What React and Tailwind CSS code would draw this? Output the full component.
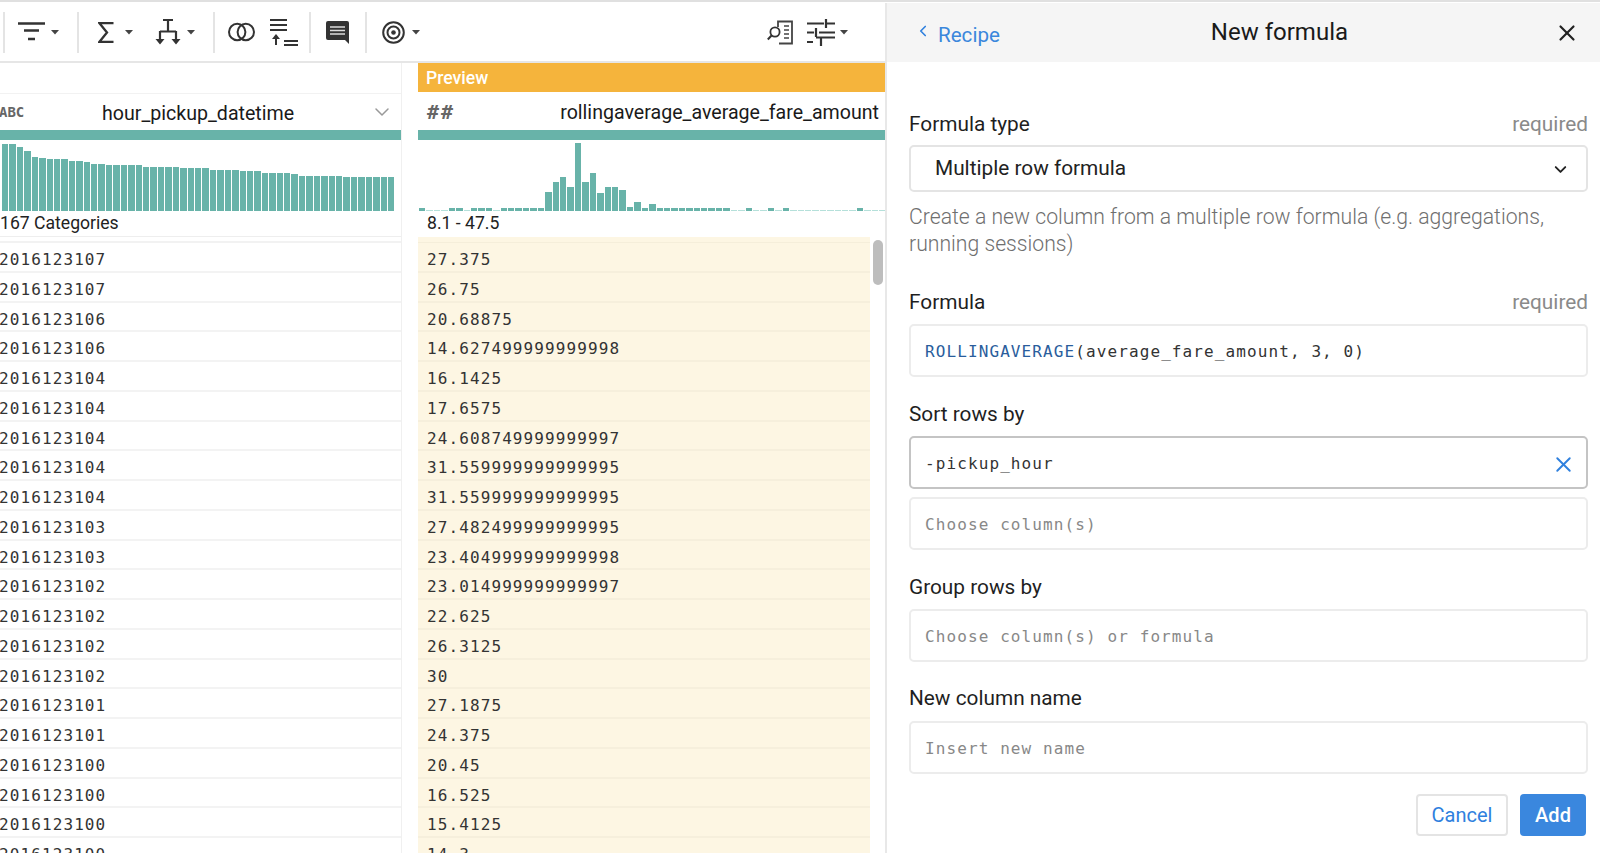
import { ChevronDown, ChevronLeft, X } from 'lucide-react'

const leftTops = [42,42,52,62,80,84,88,88,88,92,92,97,101,101,106,106,106,106,106,110,110,110,110,110,115,115,115,115,119,119,119,119,124,124,124,128,128,128,128,133,137,137,137,137,137,137,142,142,142,142,142,142,142]
const leftBars = leftTops.map((t) => (243 - t) / 3)

const rightBars = [3,1,1,1,3,3,1,3,3,3,1,3,3,3,3,3,3,19,29,34,24,68,29,38,18,24,24,21,4,9,3,7,3,3,3,3,3,3,3,3,3,3,1,1,3,1,1,3,1,3,1,1,1,1,1,1,1,1,1,3,1,1,1]

const rows = [
  ['2016123107', '27.375'],
  ['2016123107', '26.75'],
  ['2016123106', '20.68875'],
  ['2016123106', '14.627499999999998'],
  ['2016123104', '16.1425'],
  ['2016123104', '17.6575'],
  ['2016123104', '24.608749999999997'],
  ['2016123104', '31.559999999999995'],
  ['2016123104', '31.559999999999995'],
  ['2016123103', '27.482499999999995'],
  ['2016123103', '23.404999999999998'],
  ['2016123102', '23.014999999999997'],
  ['2016123102', '22.625'],
  ['2016123102', '26.3125'],
  ['2016123102', '30'],
  ['2016123101', '27.1875'],
  ['2016123101', '24.375'],
  ['2016123100', '20.45'],
  ['2016123100', '16.525'],
  ['2016123100', '15.4125'],
  ['2016123100', '14.3'],
]

function Caret({ className }) {
  return (
    <svg width="8" height="5" viewBox="0 0 8 5" className={className}>
      <path d="M0 0h8L4 4.5z" fill="#444" />
    </svg>
  )
}

function Sep({ className }) {
  return <div className={`h-[41px] w-[2px] shrink-0 bg-[#e4e4e4] ${className}`} />
}

function Toolbar() {
  return (
    <div className="flex h-[60px] shrink-0 items-center border-b-2 border-[#e6e6e6] bg-white pl-[3px]">
      <Sep />
      {/* filter */}
      <svg width="27" height="20" viewBox="0 0 27 20" className="ml-[13px]">
        <path d="M0 1.5h27M6 8.5h15M10 17h7" stroke="#333" strokeWidth="2.4" />
      </svg>
      <Caret className="ml-[6px]" />
      <Sep className="ml-[18px]" />
      {/* sigma */}
      <svg width="16" height="21" viewBox="0 0 16 21" className="ml-[19px]">
        <path d="M15.5 1.2H1.5L9 10.5 1.5 19.8h14" fill="none" stroke="#333" strokeWidth="2.3" />
      </svg>
      <Caret className="ml-[11px]" />
      {/* split */}
      <svg width="26" height="26" viewBox="0 0 26 26" className="ml-[22px]">
        <path d="M8 1h10M13 1v11M5 12.5h16M5 12v10M21 12v10" fill="none" stroke="#333" strokeWidth="2.2" />
        <path d="M0.5 20h9L5 25.5zM16.5 20h9L21 25.5z" fill="#333" />
      </svg>
      <Caret className="ml-[6px]" />
      <Sep className="ml-[18px]" />
      {/* join */}
      <svg width="27" height="20" viewBox="0 0 27 20" className="ml-[13px]">
        <circle cx="9.2" cy="10" r="8.2" fill="none" stroke="#333" strokeWidth="2" />
        <circle cx="17.8" cy="10" r="8.2" fill="none" stroke="#333" strokeWidth="2" />
      </svg>
      {/* union rows */}
      <svg width="28" height="27" viewBox="0 0 28 27" className="ml-[15px]">
        <path d="M0 1h17M0 6h17M0 11h17M14 22h14M14 26h14" stroke="#333" strokeWidth="2" />
        <path d="M6 26v-7" stroke="#333" strokeWidth="2" />
        <path d="M2 20l4-5 4 5z" fill="#333" />
      </svg>
      <Sep className="ml-[11px]" />
      {/* comment */}
      <svg width="23" height="23" viewBox="0 0 23 23" className="ml-[15px]">
        <path d="M2 0h19a2 2 0 0 1 2 2v21l-4-4H2a2 2 0 0 1-2-2V2a2 2 0 0 1 2-2z" fill="#333" />
        <path d="M4 6h15M4 9.5h15M4 13h15" stroke="#ddd" strokeWidth="1.4" />
      </svg>
      <Sep className="ml-[16px]" />
      {/* target */}
      <svg width="23" height="23" viewBox="0 0 23 23" className="ml-[15px]">
        <circle cx="11.5" cy="11.5" r="10.3" fill="none" stroke="#333" strokeWidth="2" />
        <circle cx="11.5" cy="11.5" r="6" fill="none" stroke="#333" strokeWidth="2" />
        <circle cx="11.5" cy="11.5" r="2.3" fill="#333" />
      </svg>
      <Caret className="ml-[7px]" />
      <div className="flex-1" />
      {/* search in doc */}
      <svg width="26" height="25" viewBox="0 0 26 25" className="mr-[14px]">
        <path d="M11 7V1.5h14v22H12" fill="none" stroke="#444" strokeWidth="1.8" />
        <path d="M17 6h5M17 10h5M17 14h5M17 18h5" stroke="#444" strokeWidth="1.6" />
        <circle cx="8" cy="12" r="4.6" fill="none" stroke="#333" strokeWidth="1.8" />
        <path d="M4.5 15.5L0.8 19.5" stroke="#333" strokeWidth="2" />
      </svg>
      {/* settings */}
      <svg width="28" height="27" viewBox="0 0 28 27" className="mr-[5px]">
        <path d="M0 4.5h17M19 0v9M19 4.5h9M0 13.5h7M9 9v9M12 13.5h16M0 23h6M14 18v9M9 18.5h19" fill="none" stroke="#333" strokeWidth="2.2" />
      </svg>
      <Caret className="mr-[37px]" />
    </div>
  )
}

function Histogram({ bars, className }) {
  return (
    <div className={`flex h-[71px] shrink-0 items-end gap-px ${className}`}>
      {bars.map((h, i) => (
        <div
          key={i}
          className={`w-[6.43px] shrink-0 ${h <= 1 ? 'bg-[#b5e0da]' : 'bg-[#68b3a9]'}`}
          style={{ height: h }}
        />
      ))}
    </div>
  )
}

function ColumnHead({ type, name, chevron, bars, range, chartClass, nameClass, headClass }) {
  return (
    <>
      <div className={`flex h-[37px] shrink-0 items-center ${headClass}`}>
        {type}
        <div className={`pt-[2px] text-[19.6px] leading-[37px] text-[#1a1a1a] ${nameClass}`}>{name}</div>
        {chevron}
      </div>
      <div className="h-[10px] shrink-0 bg-[#68b3a9]" />
      <Histogram bars={bars} className={chartClass} />
      {range}
    </>
  )
}

function Left() {
  return (
    <div className="flex w-[402px] shrink-0 flex-col overflow-hidden border-r border-[#f0f0f0] pt-[30px]">
      <ColumnHead
        name="hour_pickup_datetime"
        bars={leftBars}
        chartClass="pl-[2px]"
        nameClass="ml-[75px]"
        headClass="border-t border-[#f2f2f2]"
        type={<span className="-ml-[1px] w-[28px] font-['DejaVu_Sans_Mono',monospace] text-[14px] font-bold text-[#666]">ABC</span>}
        chevron={<ChevronDown size={24} strokeWidth={1.5} className="ml-auto mr-[7px] text-[#999]" />}
        range={<div className="h-[26px] shrink-0 border-b border-[#eee] text-[17.6px] leading-[24px] text-[#222]">167 Categories</div>}
      />
      <div className="h-[6px] shrink-0 border-b-2 border-[#f2f2f2]" />
      {rows.map((r, i) => (
        <div key={i} className="-ml-[1px] h-[29.75px] shrink-0 border-b-2 border-[#f3f3f3] pt-[2px] font-['DejaVu_Sans_Mono',monospace] text-[16px] leading-[30px] tracking-[1.1px] text-[#333]">
          {r[0]}
        </div>
      ))}
    </div>
  )
}

function Right() {
  return (
    <div className="ml-[16px] flex min-w-0 flex-1 flex-col overflow-hidden">
      <div className="h-[29px] shrink-0 bg-[#f5b43c] pl-[8px] text-[17.6px] font-medium leading-[30px] text-white">Preview</div>
      <div className="h-[1px] shrink-0" />
      <ColumnHead
        name="rollingaverage_average_fare_amount"
        bars={rightBars}
        chartClass="pl-[1px]"
        nameClass="ml-auto mr-[6px]"
        type={<span className="ml-[9px] font-['DejaVu_Sans_Mono',monospace] text-[20px] font-bold tracking-[2px] text-[#666]">##</span>}
        range={<div className="h-[26px] shrink-0 pl-[9px] text-[17.6px] leading-[24px] text-[#222]">8.1 - 47.5</div>}
      />
      <div className="flex min-h-0 flex-1">
        <div className="w-[452px] shrink-0 bg-[#fdf6e3]">
          <div className="h-[6px] border-b border-[#f5eeda]" />
          {rows.map((r, i) => (
            <div key={i} className="h-[29.75px] border-b-2 border-[#f6efdc] pl-[9px] pt-[2px] font-['DejaVu_Sans_Mono',monospace] text-[16px] leading-[30px] tracking-[1.1px] text-[#333]">
              {r[1]}
            </div>
          ))}
        </div>
        <div className="flex-1 pl-[3px] pt-[3px]">
          <div className="h-[45px] w-[10px] rounded-[5px] bg-[#bdbdbd]" />
        </div>
      </div>
    </div>
  )
}

function Label({ children, required }) {
  return (
    <div className="flex items-center justify-between text-[20.8px] leading-[28px]">
      <span className="text-[#1f1f1f]">{children}</span>
      {required && <span className="text-[#8a8a8a]">required</span>}
    </div>
  )
}

function Field({ children, focused }) {
  return (
    <div className={`flex h-[53px] items-center rounded-[5px] border-2 bg-white pl-[14px] pr-[10px] pt-[3px] font-['DejaVu_Sans_Mono',monospace] text-[16px] tracking-[1.1px] ${focused ? 'border-[#c4c4c4]' : 'border-[#ececec]'}`}>
      {children}
    </div>
  )
}

function Panel() {
  return (
    <div className="flex min-w-0 flex-1 flex-col">
      <div className="flex h-[59px] items-center bg-[#f5f5f5] pl-[28px] pr-[20px]">
        <ChevronLeft size={18} strokeWidth={2.2} className="-ml-[1px] -mt-[4px] text-[#2f80de]" />
        <span className="ml-[6px] mt-[5px] text-[20.6px] text-[#3b87dc]">Recipe</span>
        <span className="-mt-[1px] flex-1 pl-[5px] text-center text-[24px] text-[#1a1a1a]">New formula</span>
        <X size={26} strokeWidth={2} className="text-[#222]" />
      </div>
      <div className="flex flex-col pl-[22px] pr-[12px]">
        <div className="mt-[48px]"><Label required>Formula type</Label></div>
        <div className="mt-[7px] flex h-[47px] items-center justify-between rounded-[5px] border-2 border-[#e4e4e4] pl-[24px] pr-[16px] pt-[1px] text-[20.8px] text-[#222]">
          Multiple row formula
          <ChevronDown size={19} strokeWidth={2.4} className="text-[#222]" />
        </div>
        <p className="mt-[11px] text-[21.2px] font-light leading-[27px] text-[#6f6f6f]">
          Create a new column from a multiple row formula (e.g. aggregations, running sessions)
        </p>
        <div className="mt-[31px]"><Label required>Formula</Label></div>
        <div className="mt-[8px]">
          <Field>
            <span className="text-[#2a5d9c]">ROLLINGAVERAGE</span>
            <span className="text-[#333]">(average_fare_amount, 3, 0)</span>
          </Field>
        </div>
        <div className="mt-[23px]"><Label>Sort rows by</Label></div>
        <div className="mt-[8px]">
          <Field focused>
            <span className="flex-1 text-[#333]">-pickup_hour</span>
            <X size={25} strokeWidth={1.8} className="text-[#2f80de]" />
          </Field>
        </div>
        <div className="mt-[8px]">
          <Field><span className="text-[#888]">Choose column(s)</span></Field>
        </div>
        <div className="mt-[23px]"><Label>Group rows by</Label></div>
        <div className="mt-[8px]">
          <Field><span className="text-[#888]">Choose column(s) or formula</span></Field>
        </div>
        <div className="mt-[22px]"><Label>New column name</Label></div>
        <div className="mt-[9px]">
          <Field><span className="text-[#888]">Insert new name</span></Field>
        </div>
        <div className="mt-[20px] flex justify-end gap-[12px] pr-[2px]">
          <button className="h-[42px] w-[92px] rounded-[4px] border-2 border-[#e4e4e4] bg-white text-[20px] text-[#2f80de]">Cancel</button>
          <button className="h-[42px] w-[66px] rounded-[4px] bg-[#3a87de] text-[20px] font-medium text-white">Add</button>
        </div>
      </div>
    </div>
  )
}

export default function App() {
  return (
    <div className="h-[853px] w-[1600px] overflow-hidden bg-white font-['Roboto',sans-serif]">
      <div className="h-[3px] border-t-2 border-[#e0e0e0]" />
      <div className="flex h-[850px]">
        <div className="flex w-[887px] shrink-0 flex-col border-r-2 border-[#e8e8e8]">
          <Toolbar />
          <div className="flex min-h-0 flex-1">
            <Left />
            <Right />
          </div>
        </div>
        <Panel />
      </div>
    </div>
  )
}
